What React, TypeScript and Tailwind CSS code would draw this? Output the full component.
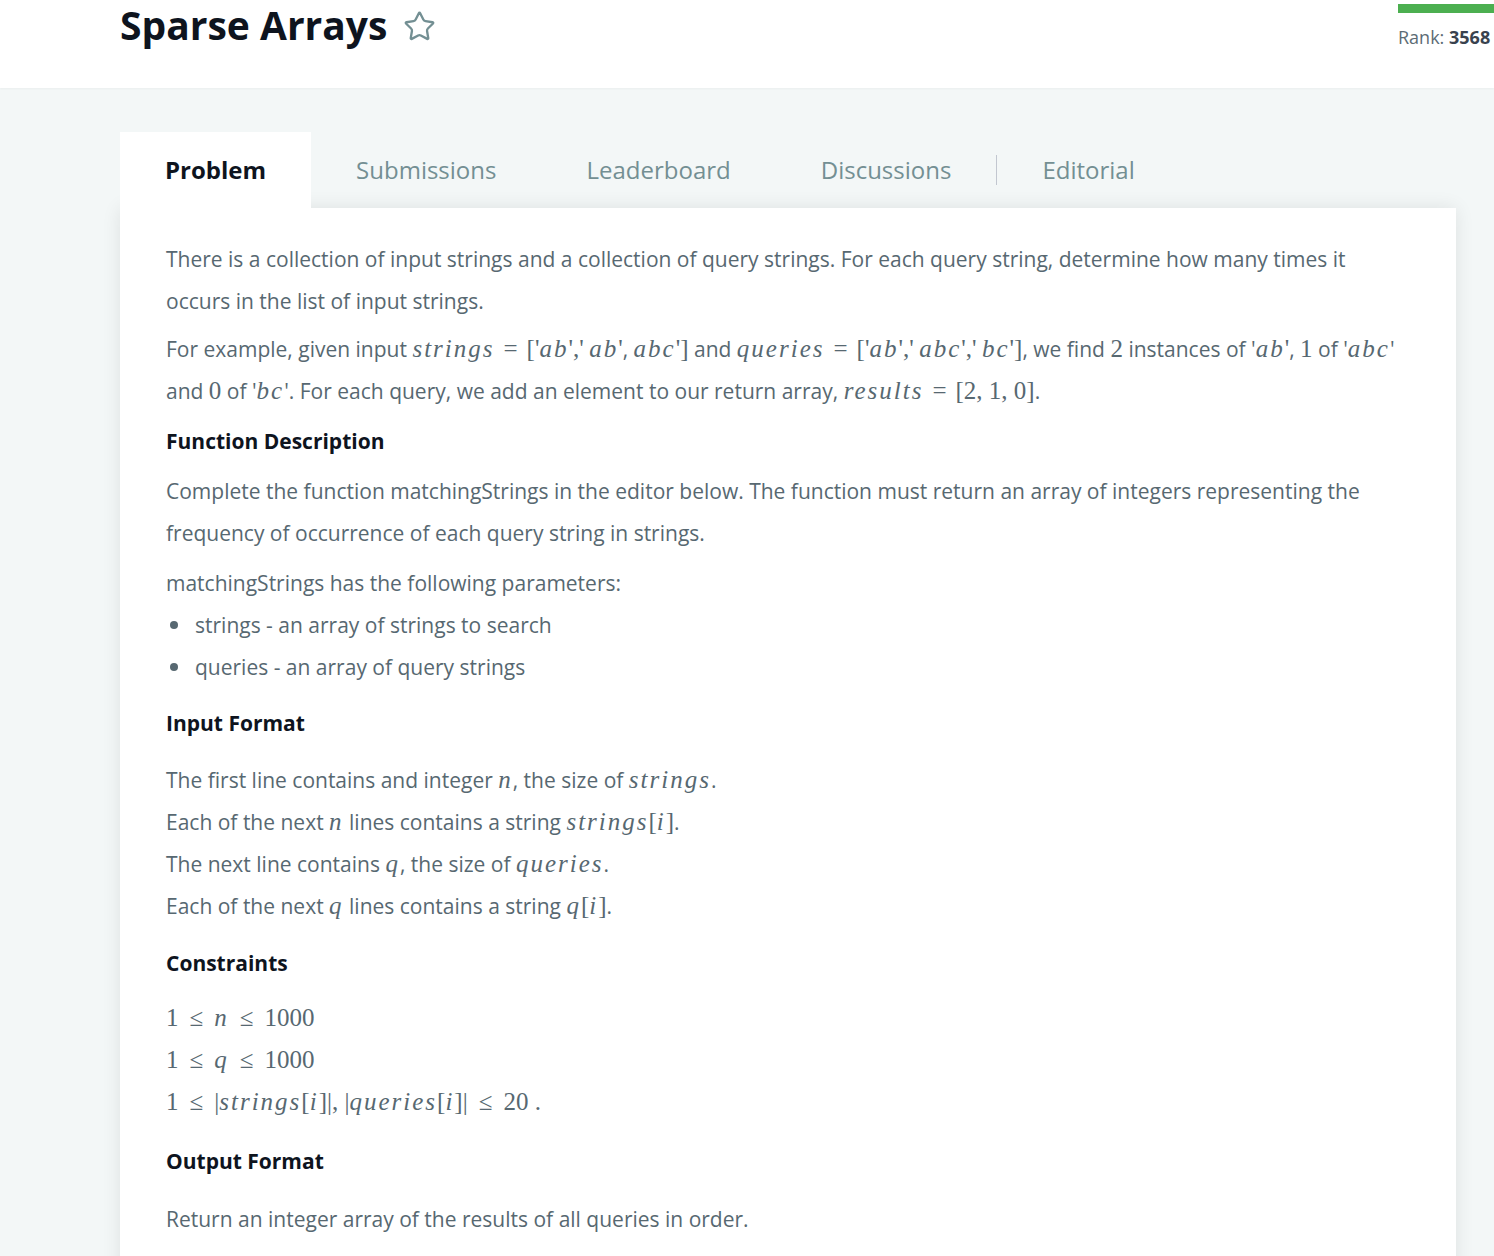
import { Star } from "lucide-react";

function I({ children }: { children: React.ReactNode }) {
  return (
    <span className="font-['Liberation_Serif',serif] text-[25px] italic tracking-[0.08em]">
      {children}
    </span>
  );
}

function U({ children }: { children: React.ReactNode }) {
  return (
    <span className="font-['Liberation_Serif',serif] text-[25px] whitespace-pre">
      {children}
    </span>
  );
}

function Rel({ children, wide }: { children: React.ReactNode; wide?: boolean }) {
  return (
    <span className={(wide ? "mx-[11px]" : "mx-[9px]") + " font-['Liberation_Serif',serif] text-[25px]"}>
      {children}
    </span>
  );
}

function Heading({ children, className }: { children: React.ReactNode; className: string }) {
  return (
    <h3 className={"text-[21px] font-bold leading-[42px] text-[#0e141e] " + className}>
      {children}
    </h3>
  );
}

const tabs = ["Submissions", "Leaderboard", "Discussions"];

export default function App() {
  return (
    <div className="min-h-[1256px] bg-[#f3f7f7] font-['Open_Sans',sans-serif]">
      <header className="flex h-[88px] items-start justify-between bg-white pl-[120px] shadow-[0_1px_2px_rgba(0,0,0,0.04)]">
        <div className="flex items-center gap-[16px] pt-[1px]">
          <h1 className="text-[39px] font-bold leading-[48px] text-[#0e141e]">Sparse Arrays</h1>
          <Star className="mt-[2px] h-[33px] w-[33px] text-[#738f93]" strokeWidth={1.7} />
        </div>
        <div className="flex w-[96px] flex-col pt-[4px]">
          <div className="h-[9px] bg-[#4caf50]" />
          <div className="mt-[11px] whitespace-nowrap text-[18px] text-[#5c6c75]">
            Rank: <span className="font-bold text-[#39424e]">3568</span>
          </div>
        </div>
      </header>

      <main className="ml-[120px] w-[1336px] pt-[44px]">
        <nav className="flex h-[76px] items-center text-[24px] text-[#738f93]">
          <div className="flex h-full items-center bg-white px-[45px] font-bold text-[#0e141e]">
            Problem
          </div>
          {tabs.map((t) => (
            <div key={t} className="px-[45px]">
              {t}
            </div>
          ))}
          <div className="h-[30px] w-px bg-[#c2c7d0]" />
          <div className="px-[45px]">Editorial</div>
        </nav>

        <article className="min-h-[1100px] bg-white px-[46px] pt-[30px] pb-[40px] text-[21px] leading-[42px] text-[#576871] shadow-[0_0_18px_rgba(0,0,0,0.09)]">
          <p>
            <span className="whitespace-nowrap">
              There is a collection of input strings and a collection of query strings. For each query string, determine how many times it
            </span>
            <br />
            occurs in the list of input strings.
          </p>
          <p className="mt-[6px]">
            <span className="whitespace-nowrap">
              For example, given input <I>strings</I>
              <Rel>=</Rel>
              <U>['</U>
              <I>ab</I>
              <U>','</U> <I>ab</I>
              <U>'</U>, <I>abc</I>
              <U>']</U> and <I>queries</I>
              <Rel>=</Rel>
              <U>['</U>
              <I>ab</I>
              <U>','</U> <I>abc</I>
              <U>','</U> <I>bc</I>
              <U>']</U>, we find <U>2</U> instances of '<I>ab</I>
              <U>'</U>, <U>1</U> of '<I>abc</I>'
            </span>
            <br />
            and <U>0</U> of '<I>bc</I>'. For each query, we add an element to our return array, <I>results</I>
            <Rel>=</Rel>
            <U>[2, 1, 0]</U>.
          </p>

          <Heading className="mt-[8px]">Function Description</Heading>
          <p className="mt-[8px]">
            <span className="whitespace-nowrap">
              Complete the function matchingStrings in the editor below. The function must return an array of integers representing the
            </span>
            <br />
            frequency of occurrence of each query string in strings.
          </p>
          <p className="mt-[8px]">matchingStrings has the following parameters:</p>
          <ul>
            {["strings - an array of strings to search", "queries - an array of query strings"].map((b) => (
              <li key={b} className="flex items-center">
                <span className="ml-[4px] mr-[17px] h-[8px] w-[8px] rounded-full bg-[#576871]" />
                {b}
              </li>
            ))}
          </ul>

          <Heading className="mt-[14px]">Input Format</Heading>
          <div className="mt-[15px]">
            <p>
              The first line contains and integer <I>n</I>, the size of <I>strings</I>.
            </p>
            <p>
              Each of the next <I>n</I> lines contains a string <I>strings</I>
              <U>[</U>
              <I>i</I>
              <U>]</U>.
            </p>
            <p>
              The next line contains <I>q</I>, the size of <I>queries</I>.
            </p>
            <p>
              Each of the next <I>q</I> lines contains a string <I>q</I>
              <U>[</U>
              <I>i</I>
              <U>]</U>.
            </p>
          </div>

          <Heading className="mt-[15px]">Constraints</Heading>
          <div className="mt-[13px]">
            <p>
              <U>1</U>
              <Rel wide>≤</Rel>
              <I>n</I>
              <Rel wide>≤</Rel>
              <U>1000</U>
            </p>
            <p>
              <U>1</U>
              <Rel wide>≤</Rel>
              <I>q</I>
              <Rel wide>≤</Rel>
              <U>1000</U>
            </p>
            <p>
              <U>1</U>
              <Rel wide>≤</Rel>
              <U>|</U>
              <I>strings</I>
              <U>[</U>
              <I>i</I>
              <U>]|, |</U>
              <I>queries</I>
              <U>[</U>
              <I>i</I>
              <U>]|</U>
              <Rel wide>≤</Rel>
              <U>20 .</U>
            </p>
          </div>

          <Heading className="mt-[17px]">Output Format</Heading>
          <p className="mt-[16px]">Return an integer array of the results of all queries in order.</p>
        </article>
      </main>
    </div>
  );
}
